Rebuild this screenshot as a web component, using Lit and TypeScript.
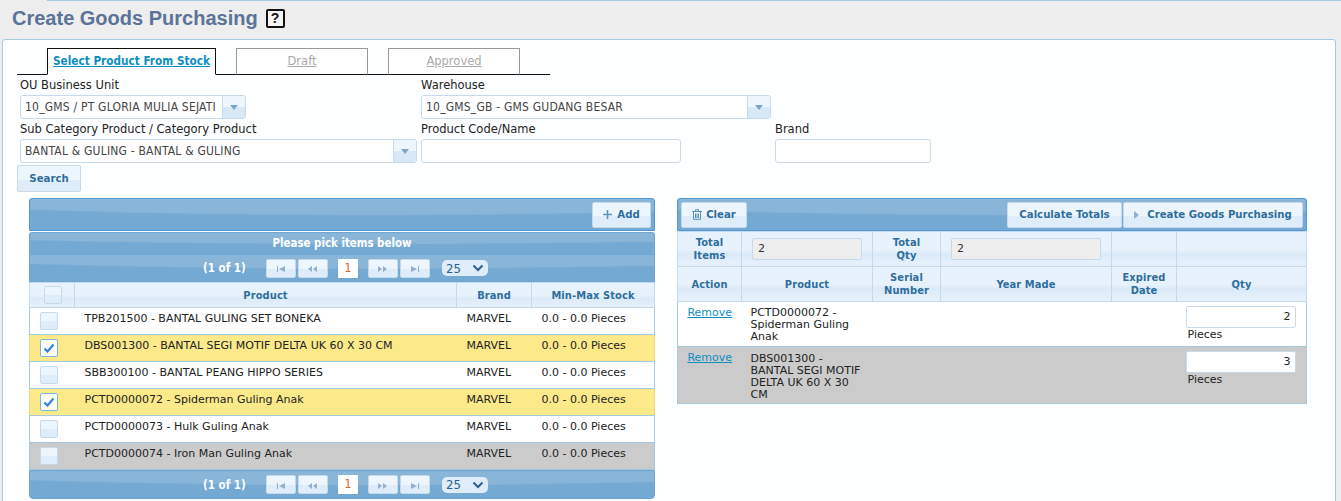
import { LitElement, html, css, svg } from "lit";
import { customElement } from "lit/decorators.js";

const LEFT = [
  ["TPB201500 - BANTAL GULING SET BONEKA", "", false],
  ["DBS001300 - BANTAL SEGI MOTIF DELTA UK 60 X 30 CM", "picked", true],
  ["SBB300100 - BANTAL PEANG HIPPO SERIES", "", false],
  ["PCTD0000072 - Spiderman Guling Anak", "picked", true],
  ["PCTD0000073 - Hulk Guling Anak", "", false],
  ["PCTD0000074 - Iron Man Guling Anak", "hov", false],
] as const;

const pagerIcon = (d: string) => html`<svg class="pi" width="14" height="8" viewBox="0 0 14 8">${svg`<path d=${d} fill="#8fb1cf"/>`}</svg>`;

@customElement("app-root")
export class AppRoot extends LitElement {
  static styles = css`
    :host { display: block; width: 1341px; height: 501px; overflow: hidden; background: #eeeeee;
      font-family: "DejaVu Sans", Verdana, sans-serif; font-size: 11px; color: #222; }
    * { box-sizing: border-box; }
    .strip { height: 1px; margin-left: 47px; background: #a6c9e2; }
    .head { height: 38px; display: flex; align-items: center; gap: 8px; padding: 0 0 3px 12px; }
    h1 { margin: 0; font: bold 20px "Liberation Sans", Arial, sans-serif; color: #5b7399; }
    .help { width: 19px; height: 19px; border: 2px solid #111; border-radius: 2px; background: #f5f5f5;
      font: bold 14px/15px "Liberation Sans", sans-serif; text-align: center; color: #111; }
    .panel { width: 1334px; height: 470px; margin-left: 2px; border: 1px solid #a6c9e2; border-radius: 3px 3px 0 0;
      background: #fdfeff; padding: 8px 0 0 14px; }
    .tabs { display: flex; width: 533px; height: 27px; border-bottom: 1px solid #111; padding-left: 30px; }
    .tab { height: 27px; margin-right: 20px; width: 132px; border: 1px solid #999; border-bottom: 1px solid #111; background: #fff;
      text-align: center; line-height: 24px; font-size: 11.5px; color: #aaa; text-decoration: underline; white-space: nowrap; }
    .tab.on { width: 169px; border-color: #111; border-bottom-color: #fdfeff; color: #0e8fc2; font: bold 11.7px/24px "DejaVu Sans Condensed", "DejaVu Sans", sans-serif; }
    .form { padding-left: 3px; }
    .row { display: flex; }
    .f { display: flex; flex-direction: column; }
    .lab { height: 20px; line-height: 21px; font-size: 11.5px; color: #222; }
    .sel, .txt { height: 24px; border: 1px solid #c5dbec; border-radius: 3px; background: #fff; display: flex; }
    .sel .v { flex: 1; padding-left: 4px; line-height: 22px; font-family: "DejaVu Sans Condensed", "DejaVu Sans", sans-serif; font-size: 12px; letter-spacing: .2px; color: #444; white-space: nowrap; overflow: hidden; }
    .sel .b { width: 23px; flex: none; border-left: 1px solid #c5dbec; border-radius: 0 2px 2px 0;
      background: linear-gradient(#eef5fc 0 50%, #d9e8f7 50% 100%); display: flex; align-items: center; justify-content: center; }
    .caret { width: 0; height: 0; border: 4px solid transparent; border-top: 5px solid #7aa5c9; border-bottom: 0; }
    .btn { display: inline-flex; align-items: center; justify-content: center; border: 1px solid #c5dbec; border-radius: 2px; white-space: nowrap;
      background: linear-gradient(#eef6fd 0 55%, #dfecf9 55% 100%); color: #2e6e9e;
      font: bold 11.3px "DejaVu Sans Condensed", "DejaVu Sans", sans-serif; }
    .search { width: 64px; height: 27px; margin: 2px 0 0 -3px; display: flex; }
    .grids { display: flex; gap: 22px; margin: 6px 0 0 12px; align-items: flex-start; }
    .lg { width: 626px; }
    .rg { width: 630px; }
    .bar { height: 33px; border: 1px solid #4f9ad6; border-radius: 3px 3px 0 0; display: flex; align-items: center; padding: 0 3px;
      background: radial-gradient(130% 170% at 55% -100%, #89b5d9 0 88%, #74a9d3 91% 100%); }
    .lg .bar { justify-content: flex-end; }
    .rg .bar { justify-content: space-between; }
    .bar .btn { height: 26px; }
    .add { width: 59px; gap: 5px; }
    .clear { width: 66px; gap: 4px; }
    .rb { display: flex; gap: 1px; }
    .calc { width: 115px; }
    .create { width: 180px; gap: 8px; }
    .title { margin-top: 1px; height: 22px; border: 1px solid #6ea6d3; border-bottom: 0; border-radius: 3px 3px 0 0;
      color: #fff; text-align: center;
      font: bold 11.4px/20px "DejaVu Sans Condensed", "DejaVu Sans", sans-serif;
      background: radial-gradient(130% 170% at 55% -100%, #89b5d9 0 88%, #74a9d3 91% 100%); }
    .pager { height: 28px; border: 1px solid #6ea6d3; display: flex; align-items: center; padding-left: 173px;
      background: radial-gradient(130% 170% at 55% -100%, #89b5d9 0 88%, #74a9d3 91% 100%); color: #fff;
      font: bold 11.5px "DejaVu Sans Condensed", "DejaVu Sans", sans-serif; }
    .pager.bot { height: 29px; border-radius: 0 0 4px 4px; }
    .cnt { width: 63px; }
    .pb { width: 30px; height: 19px; margin-right: 2px; border: 1px solid #c5dbec; border-radius: 2px;
      background: linear-gradient(#eef6fd 0 55%, #dfecf9 55% 100%); display: flex; align-items: center; justify-content: center; }
    .pi { display: block; margin-top: 2px; }
    .num { width: 20px; height: 19px; margin: 0 10px 0 8px; background: #fff; border-radius: 1px; color: #d9622b;
      text-align: center; line-height: 18px; font-weight: normal; font-size: 12px; }
    .rpp { width: 46px; height: 16px; margin-left: 10px; background: #dfecf9; border-radius: 5px; color: #2e5f8e; font-weight: normal; font-size: 13px;
      display: flex; align-items: center; justify-content: space-between; padding: 0 4px; }
    table { border-collapse: collapse; table-layout: fixed; width: 100%; }
    th { border: 1px solid #c5dbec; background: linear-gradient(#e8f2fc 0 50%, #dbe9f8 62%, #e8f2fc 100%); color: #2e6e9e; padding: 0; text-align: center;
      font: bold 11px/13px "DejaVu Sans Condensed", "DejaVu Sans", sans-serif; letter-spacing: .1px; }
    td { border: 1px solid #a6c9e2; border-left: 0; border-right: 0; padding: 0; vertical-align: top; color: #222; }
    td:first-child { border-left: 1px solid #a6c9e2; }
    td:last-child { border-right: 1px solid #a6c9e2; }
    .lt tr.h th { height: 25px; }
    .lt td { height: 27px; line-height: 21px; background: #fff; white-space: nowrap; }
    .lt tr.picked td { background: #fbe98a; border-left-color: #f3d96f; border-right-color: #f3d96f; }
    .lt tr.hov td { background: #cbcbcb; }
    .cb { width: 18px; height: 18px; border: 1px solid #c5dbec; border-radius: 2px; background: linear-gradient(#eef6fd 0 50%, #dfecf9 50% 100%); display: flex; align-items: center; justify-content: center; }
    .cb.on { background: #fff; border-color: #79b7e7; }
    .cbc { padding: 4px 0 0 10px !important; }
    th .cb { margin-left: 14px; }
    .pc { padding-left: 10px !important; }
    .rt tr.h th { height: 35px; }
    .rt td { background: #fff; line-height: 12px; padding-top: 5px; }
    .rt tr.g td { background: #cbcbcb; }
    .rm { display: block; text-align: center; color: #0e8fc2; text-decoration: underline; }
    .ptxt { padding-left: 9px; line-height: 12px; width: 124px; }
    .rt tr.g .ptxt { padding-top: 1px; }
    .rt td.q { padding-top: 4px; }
    .ro { width: 110px; height: 22px; margin-left: 10px; border: 1px solid #c5dbec; border-radius: 2px; background: #eeeeee; font: normal 11px/20px "DejaVu Sans", sans-serif; padding-left: 5px; text-align: left; color: #333; }
    .qty { width: 110px; height: 22px; margin-left: 9px; border: 1px solid #c5dbec; border-radius: 2px; background: #fff; text-align: right; padding-right: 4px; line-height: 20px; }
    .unit { margin: 0 0 0 11px; line-height: 13px; }
  `;

  private pager(bot = false) {
    return html`<div class="pager ${bot ? "bot" : ""}">
      <span class="cnt">(1 of 1)</span>
      <span class="pb">${pagerIcon("M3 1h1v6H3zM11 1v6L5 4z")}</span>
      <span class="pb">${pagerIcon("M6 1v6L2 4zM11 1v6L7 4z")}</span>
      <span class="num">1</span>
      <span class="pb">${pagerIcon("M2 1v6l4-3zM7 1v6l4-3z")}</span>
      <span class="pb">${pagerIcon("M3 1v6l6-3zM10 1h1v6h-1z")}</span>
      <span class="rpp">25<svg width="12" height="8" viewBox="0 0 12 8"><path d="M1.5 1.5 6 6l4.5-4.5" fill="none" stroke="#2e5f8e" stroke-width="2"/></svg></span>
    </div>`;
  }

  private check(on: boolean) {
    return html`<div class="cb ${on ? "on" : ""}">${on
      ? html`<svg width="12" height="10" viewBox="0 0 12 10"><path d="M1.5 5.5 4.5 8.5 10.5 1.5" fill="none" stroke="#2e83e6" stroke-width="2.2"/></svg>`
      : ""}</div>`;
  }

  render() {
    return html`
      <div class="strip"></div>
      <div class="head"><h1>Create Goods Purchasing</h1><span class="help">?</span></div>
      <div class="panel">
        <div class="tabs">
          <div class="tab on">Select Product From Stock</div>
          <div class="tab">Draft</div>
          <div class="tab">Approved</div>
        </div>
        <div class="form">
          <div class="row">
            <div class="f" style="width:401px"><span class="lab">OU Business Unit</span>
              <div class="sel" style="width:226px"><span class="v">10_GMS / PT GLORIA MULIA SEJATI</span><span class="b"><i class="caret"></i></span></div></div>
            <div class="f"><span class="lab">Warehouse</span>
              <div class="sel" style="width:350px"><span class="v">10_GMS_GB - GMS GUDANG BESAR</span><span class="b"><i class="caret"></i></span></div></div>
          </div>
          <div class="row">
            <div class="f" style="width:401px"><span class="lab">Sub Category Product / Category Product</span>
              <div class="sel" style="width:397px"><span class="v">BANTAL &amp; GULING - BANTAL &amp; GULING</span><span class="b"><i class="caret"></i></span></div></div>
            <div class="f" style="width:354px"><span class="lab">Product Code/Name</span><div class="txt" style="width:260px"></div></div>
            <div class="f"><span class="lab">Brand</span><div class="txt" style="width:156px"></div></div>
          </div>
          <div class="btn search">Search</div>
        </div>
        <div class="grids">
          <div class="lg">
            <div class="bar"><span class="btn add"><svg width="9" height="9" viewBox="0 0 9 9"><path d="M4.5 0v9M0 4.5h9" stroke="#5b93bf" stroke-width="1.6"/></svg>Add</span></div>
            <div class="title">Please pick items below</div>
            ${this.pager()}
            <table class="lt">
              <colgroup><col style="width:45px"/><col style="width:382px"/><col style="width:75px"/><col/></colgroup>
              <tr class="h"><th>${this.check(false)}</th><th>Product</th><th>Brand</th><th>Min-Max Stock</th></tr>
              ${LEFT.map(([n, c, on]) => html`<tr class=${c}>
                <td class="cbc">${this.check(on)}</td><td class="pc">${n}</td><td class="pc">MARVEL</td><td class="pc">0.0 - 0.0 Pieces</td></tr>`)}
            </table>
            ${this.pager(true)}
          </div>
          <div class="rg">
            <div class="bar">
              <span class="btn clear"><svg width="10" height="11" viewBox="0 0 10 11"><path d="M0 2.5h10M3.5 2V.7h3V2M1.5 3v7.3h7V3M3.5 4.5v4.5M5 4.5v4.5M6.5 4.5v4.5" fill="none" stroke="#5b93bf" stroke-width="1"/></svg>Clear</span>
              <span class="rb"><span class="btn calc">Calculate Totals</span>
              <span class="btn create"><svg width="5" height="8" viewBox="0 0 5 8"><path d="M0 0v8l5-4z" fill="#8fb1cf"/></svg>Create Goods Purchasing</span></span>
            </div>
            <table class="rt">
              <colgroup><col style="width:64px"/><col style="width:131px"/><col style="width:68px"/><col style="width:171px"/><col style="width:65px"/><col/></colgroup>
              <tr class="h"><th>Total<br/>Items</th><th><div class="ro">2</div></th><th>Total<br/>Qty</th><th><div class="ro" style="width:150px">2</div></th><th></th><th></th></tr>
              <tr class="h"><th>Action</th><th>Product</th><th>Serial<br/>Number</th><th>Year Made</th><th>Expired<br/>Date</th><th>Qty</th></tr>
              <tr style="height:45px"><td><a class="rm">Remove</a></td><td><div class="ptxt">PCTD0000072 - Spiderman Guling Anak</div></td><td></td><td></td><td></td>
                <td class="q"><div class="qty">2</div><div class="unit">Pieces</div></td></tr>
              <tr class="g" style="height:57px"><td><a class="rm">Remove</a></td><td><div class="ptxt">DBS001300 - BANTAL SEGI MOTIF DELTA UK 60 X 30 CM</div></td><td></td><td></td><td></td>
                <td class="q"><div class="qty">3</div><div class="unit">Pieces</div></td></tr>
            </table>
          </div>
        </div>
      </div>
    `;
  }
}
